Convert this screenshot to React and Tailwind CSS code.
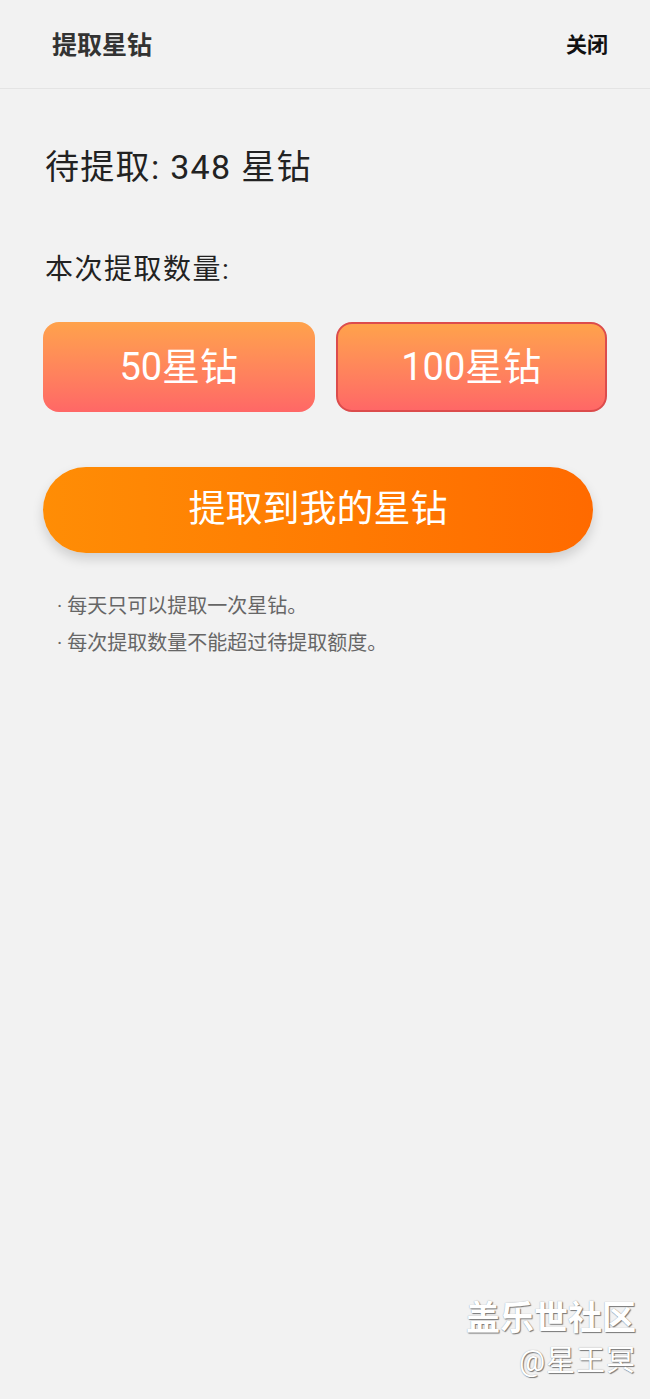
export default function App() {
  const font = { fontFamily: 'Roboto, "Noto Sans CJK SC", "Noto Sans", sans-serif' };

  return (
    <div className="w-[650px] h-[1399px] bg-[#f2f2f2] flex flex-col relative" style={font}>
      {/* Header */}
      <div className="h-[89px] shrink-0 flex items-center justify-between pl-[52px] pr-[42px] pt-[3px] border-b border-[#e4e4e4]">
        <span className="text-[25px] font-bold text-[#333]">提取星钻</span>
        <span className="text-[21px] font-bold text-[#111]">关闭</span>
      </div>

      <div className="px-[43px] flex flex-col">
        <p className="mt-[55px] pl-[2px] text-[34px] leading-[46px] tracking-[1.3px] text-[#222]">待提取: 348 星钻</p>
        <p className="mt-[61px] pl-[2px] text-[28px] leading-[38px] tracking-[1.5px] text-[#222]">本次提取数量:</p>

        {/* Amount options */}
        <div className="mt-[33px] flex gap-[21px]">
          <button className="w-[272px] h-[90px] rounded-[16px] bg-gradient-to-b from-[#ffa24b] to-[#ff6766] text-white text-[38px]">
            50星钻
          </button>
          <button className="w-[272px] h-[90px] rounded-[16px] border-2 border-[#dc4c4c] bg-gradient-to-b from-[#ffa24b] to-[#ff6766] text-white text-[38px]">
            100星钻
          </button>
        </div>

        {/* Submit */}
        <button className="mt-[55px] w-[550px] h-[86px] rounded-full bg-gradient-to-r from-[#ff8d05] to-[#ff6a00] text-white text-[37px] shadow-[0_6px_12px_rgba(0,0,0,0.15)]">
          提取到我的星钻
        </button>

        {/* Notes */}
        <div className="mt-[39px] pl-[14px] flex flex-col gap-[9px] text-[20px] leading-[28px] text-[#666]">
          <p>· 每天只可以提取一次星钻。</p>
          <p>· 每次提取数量不能超过待提取额度。</p>
        </div>
      </div>

      {/* Watermark */}
      <div className="absolute right-[14px] bottom-[20px] flex flex-col items-end text-white">
        <span className="text-[34px] leading-[44px] font-bold [text-shadow:1px_1px_1px_#777,0_0_1px_#999]">盖乐世社区</span>
        <span className="mt-[3px] text-[29px] leading-[36px] tracking-[1px] [text-shadow:1px_1px_1px_#777,0_0_1px_#999]">@星王冥</span>
      </div>
    </div>
  );
}
